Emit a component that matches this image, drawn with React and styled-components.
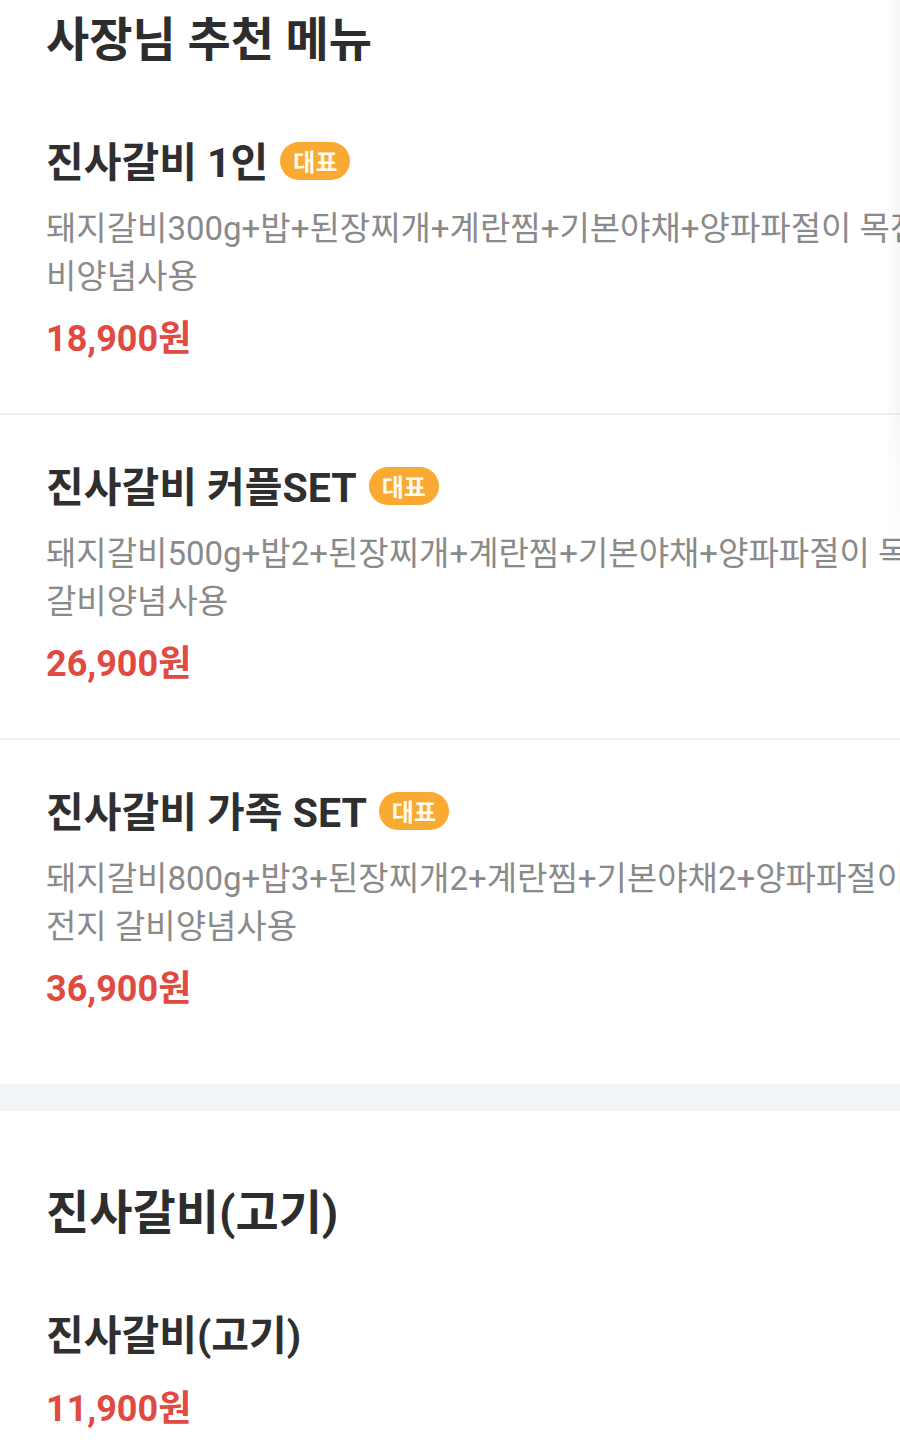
import React from "react";
import styled, { createGlobalStyle } from "styled-components";

const Global = createGlobalStyle`
  html, body {
    margin: 0;
    padding: 0;
    background: #ffffff;
  }
  body {
    overflow-x: hidden;
    font-family: Roboto, "Noto Sans CJK KR", "Noto Sans", sans-serif;
    -webkit-font-smoothing: antialiased;
  }
`;

const Page = styled.main`
  position: relative;
  width: 100%;
  overflow: hidden;
  background: #ffffff;
`;

const EdgeShade = styled.div`
  position: absolute;
  top: 0;
  right: 0;
  width: 16px;
  height: 560px;
  background: linear-gradient(to right, rgba(0, 0, 0, 0), rgba(0, 0, 0, 0.035));
  -webkit-mask-image: linear-gradient(to bottom, #000 70%, transparent);
  mask-image: linear-gradient(to bottom, #000 70%, transparent);
  pointer-events: none;
`;

const Section = styled.section`
  display: flex;
  flex-direction: column;
  padding: ${(p) => p.$top}px 0 ${(p) => p.$bottom}px;
`;

const SectionTitle = styled.h2`
  margin: 0 0 ${(p) => p.$gap}px;
  padding-left: 46px;
  font-size: 47px;
  line-height: 56px;
  font-weight: 700;
  color: #2d2d2d;
  white-space: nowrap;
`;

const MenuList = styled.ul`
  list-style: none;
  margin: 0;
  padding: 0;
  display: flex;
  flex-direction: column;
`;

const MenuItem = styled.li`
  display: flex;
  flex-direction: column;
  padding: 48px 0 ${(p) => (p.$last ? 71 : 50)}px 46px;
  border-bottom: ${(p) => (p.$last ? "none" : "2px solid #efefef")};
`;

const NameRow = styled.div`
  display: flex;
  align-items: center;
  gap: 12px;
  height: 50px;
`;

const Name = styled.h3`
  margin: 0;
  font-size: 41px;
  line-height: 50px;
  font-weight: 700;
  color: #2f2f2f;
  white-space: nowrap;
`;

const Badge = styled.span`
  display: inline-flex;
  align-items: center;
  justify-content: center;
  height: 38px;
  padding: 0 13px;
  margin-top: -4px;
  border-radius: 19px;
  background: #f9aa33;
  color: #fffaf0;
  font-size: 24px;
  font-weight: 700;
  line-height: 1;
  font-family: "Noto Sans CJK KR", sans-serif;
`;

const Description = styled.div`
  margin-top: 17px;
  display: flex;
  flex-direction: column;
`;

const DescLine = styled.span`
  font-size: 33px;
  line-height: 48px;
  font-weight: 400;
  color: #8a8a8a;
  white-space: pre;
`;

const Price = styled.div`
  margin-top: ${(p) => (p.$afterDesc ? 14 : 24)}px;
  font-size: 36px;
  line-height: 48px;
  font-weight: 700;
  color: #e14a40;
  white-space: nowrap;
`;

const Band = styled.div`
  height: 27px;
  background: #f2f5f8;
`;

const recommended = [
  {
    name: "진사갈비 1인",
    badge: "대표",
    desc: ["돼지갈비300g+밥+된장찌개+계란찜+기본야채+양파파절이 목전지 갈", "비양념사용"],
    price: "18,900원",
  },
  {
    name: "진사갈비 커플SET",
    badge: "대표",
    desc: ["돼지갈비500g+밥2+된장찌개+계란찜+기본야채+양파파절이 목전지 ", "갈비양념사용"],
    price: "26,900원",
  },
  {
    name: "진사갈비 가족 SET",
    badge: "대표",
    desc: ["돼지갈비800g+밥3+된장찌개2+계란찜+기본야채2+양파파절이 목", "전지 갈비양념사용"],
    price: "36,900원",
  },
];

const meat = [{ name: "진사갈비(고기)", price: "11,900원" }];

function MenuEntry({ item, last }) {
  return (
    <MenuItem $last={last}>
      <NameRow>
        <Name>{item.name}</Name>
        {item.badge && <Badge>{item.badge}</Badge>}
      </NameRow>
      {item.desc && (
        <Description>
          {item.desc.map((line, i) => (
            <DescLine key={i}>{line}</DescLine>
          ))}
        </Description>
      )}
      <Price $afterDesc={!!item.desc}>{item.price}</Price>
    </MenuItem>
  );
}

export default function App() {
  return (
    <>
      <Global />
      <Page>
        <EdgeShade />
        <Section $top={12} $bottom={0}>
          <SectionTitle $gap={22}>사장님 추천 메뉴</SectionTitle>
          <MenuList>
            {recommended.map((item, i) => (
              <MenuEntry key={item.name} item={item} last={i === recommended.length - 1} />
            ))}
          </MenuList>
        </Section>
        <Band />
        <Section $top={74} $bottom={30}>
          <SectionTitle $gap={22}>진사갈비(고기)</SectionTitle>
          <MenuList>
            {meat.map((item, i) => (
              <MenuEntry key={item.name} item={item} last={i === meat.length - 1} />
            ))}
          </MenuList>
        </Section>
      </Page>
    </>
  );
}
